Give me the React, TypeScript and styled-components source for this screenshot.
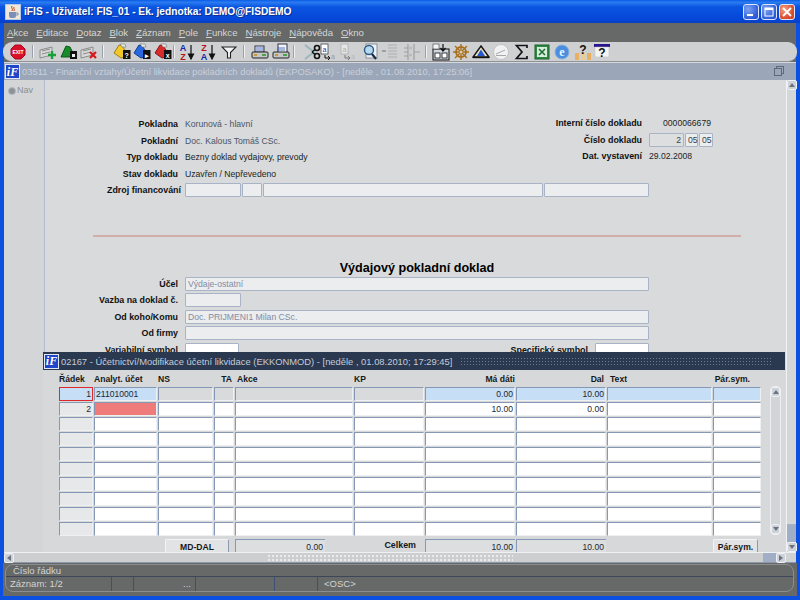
import React from 'react'
import styled, { createGlobalStyle } from 'styled-components'

const GlobalStyle = createGlobalStyle`
  html, body {
    margin: 0;
    padding: 0;
    background: #0a4fdc;
  }
  * {
    box-sizing: border-box;
  }
`

const Frame = styled.div`
  position: relative;
  width: 800px;
  height: 600px;
  overflow: hidden;
  display: flex;
  flex-direction: column;
  font-family: "Liberation Sans", Arial, sans-serif;
  background: #0b50e0;
`

const TitleBar = styled.div`
  height: 23px;
  flex: none;
  display: flex;
  align-items: center;
  padding: 0 5px 0 5px;
  background: linear-gradient(180deg, #0a5ce6 0%, #2b7cf2 10%, #0a55e0 30%, #0546d8 85%, #0a3fc0 100%);
  color: #fff;
  font-weight: 700;
  font-size: 10.2px;
`

const TitleText = styled.span`
  margin-left: 0;
  flex: 1;
  text-shadow: 1px 1px 0 #0a2f90;
  white-space: nowrap;
`

const WinButtons = styled.div`
  display: flex;
  gap: 2px;
`

const WinButton = styled.div<{ $close?: boolean }>`
  width: 16px;
  height: 16px;
  border: 1px solid #dfe8fb;
  border-radius: 3px;
  display: flex;
  align-items: center;
  justify-content: center;
  background: ${p => (p.$close ? 'radial-gradient(circle at 30% 30%, #f0a080, #d8482a 70%)' : 'radial-gradient(circle at 30% 30%, #7ea4f0, #2a58d8 75%)')};
`

const Body = styled.div`
  flex: 1;
  min-height: 0;
  margin: 0 4px 4px 4px;
  display: flex;
  flex-direction: column;
  background: #666a68;
`

const MenuBar = styled.div`
  height: 19px;
  flex: none;
  display: flex;
  align-items: center;
  gap: 8px;
  padding: 0 0 0 3px;
  background: #666968;
  color: #d4d6d6;
  font-size: 9.6px;
`

const MenuItem = styled.span`
  display: inline-block;

  &::first-letter {
    text-decoration: underline;
  }
`

const Toolbar = styled.div`
  height: 20px;
  flex: none;
  display: flex;
  align-items: center;
  margin: 0 -1px;
  background: #cfd0d1;
  border-radius: 9px;
  border-bottom: 1px solid #8f9296;
`

const Tool = styled.div<{ $ml: number; $faded?: boolean }>`
  width: 18px;
  height: 18px;
  margin-left: ${p => p.$ml}px;
  flex: none;
  display: flex;
  align-items: center;
  justify-content: center;
  opacity: ${p => (p.$faded ? 0.45 : 1)};

  svg {
    flex: none;
  }
`

const ToolSep = styled.div<{ $ml: number }>`
  width: 2px;
  height: 13px;
  margin-left: ${p => p.$ml}px;
  flex: none;
  background: linear-gradient(90deg, #9aa0a8 50%, #f0f0f0 50%);
`

const Desktop = styled.div`
  position: relative;
  flex: 1;
  min-height: 0;
  display: flex;
  flex-direction: column;
  background: #d6d8d9;
`

const MdiTitle = styled.div`
  height: 17px;
  flex: none;
  display: flex;
  align-items: center;
  padding: 0 2px 0 1px;
  margin-top: 1px;
  background: #9ba6b8;
  color: #c9d0da;
  font-size: 9.4px;
  white-space: nowrap;
`

const TitleCaption = styled.span`
  margin-left: 2px;
  flex: 1;
`

const Logo = styled.span`
  width: 15px;
  height: 15px;
  flex: none;
  display: inline-flex;
  align-items: center;
  justify-content: center;
  background: #1f45c8;
  border: 1px solid #dfe6f4;
  color: #fff;
  font-family: "Liberation Serif", serif;
  font-style: italic;
  font-weight: 700;
  font-size: 12px;
  line-height: 1;
`

const RestoreIcon = styled.div`
  width: 8px;
  height: 8px;
  margin-right: 12px;
  border: 1px solid #5f6a78;
  box-shadow: 2px -2px 0 -1px #9ba6b8, 2px -2px 0 0 #5f6a78;
`

const MdiBody = styled.div`
  flex: 1;
  min-height: 0;
  display: flex;
`

const NavColumn = styled.div`
  width: 41px;
  flex: none;
  padding: 5px 0 0 4px;
  background: #d3d5d6;
  border-right: 1px solid #b4bdd0;
  color: #8b9096;
  font-size: 9px;
  display: flex;
  align-items: flex-start;
  gap: 1px;
`

const NavDot = styled.span`
  width: 8px;
  height: 8px;
  margin-top: 2px;
  border-radius: 50%;
  background: #8d9298;
  border: 1px solid #b4b8bc;
`

const FormArea = styled.div`
  flex: 1;
  min-width: 0;
  padding-top: 36px;
  background: #d8dadb;
  color: #111;
  font-size: 9px;
`

const TopBlock = styled.div`
  display: flex;
`

const TopColumn = styled.div<{ $w?: number; $up?: number }>`
  width: ${p => (p.$w ? `${p.$w}px` : 'auto')};
  margin-top: ${p => (p.$up ? -p.$up : 0)}px;
`

const Row = styled.div<{ $gap?: number }>`
  height: 16.5px;
  display: flex;
  align-items: center;
  gap: ${p => p.$gap ?? 7}px;
`

const Label = styled.div<{ $w?: number }>`
  width: ${p => p.$w ?? 133}px;
  flex: none;
  text-align: right;
  font-weight: 700;
  font-size: 8.9px;
  white-space: nowrap;
`

const Value = styled.div<{ $muted?: boolean; $end?: number }>`
  color: ${p => (p.$muted ? '#4c5668' : '#1c1f24')};
  font-size: 8.65px;
  white-space: nowrap;
  text-align: ${p => (p.$end ? 'right' : 'left')};
  width: ${p => (p.$end ? `${p.$end}px` : 'auto')};
`

const Fields = styled.div`
  display: flex;
  gap: 1px;
`

const Field = styled.div<{ $w: number; $tone?: 'white' | 'gray' | 'pale'; $right?: boolean; $dark?: boolean }>`
  width: ${p => p.$w}px;
  height: 14px;
  flex: none;
  padding: 0 2px;
  display: flex;
  align-items: center;
  justify-content: ${p => (p.$right ? 'flex-end' : 'flex-start')};
  border: 1px solid #a8b4c6;
  border-radius: 1px;
  background-color: ${p => (p.$tone === 'white' ? '#fff' : p.$tone === 'gray' ? '#dcdedf' : '#ecedee')};
  color: ${p => (p.$dark ? '#3a3f48' : '#7f8ca6')};
  font-size: 8.65px;
  white-space: nowrap;
`

const Rule = styled.div`
  margin: 36px 0 0 48px;
  width: 648px;
  height: 2px;
  background: #d2aeaa;
`

const Heading = styled.div`
  margin: 23px 0 0 48px;
  width: 648px;
  height: 16px;
  line-height: 16px;
  text-align: center;
  color: #000;
  font-size: 12.6px;
  font-weight: 700;
`

const OuterScroll = styled.div`
  width: 10px;
  flex: none;
  display: flex;
  flex-direction: column;
  background: #d0d2d4;
  border-left: 1px solid #f0f2f4;
`

const ScrollArrow = styled.div<{ $dir: 'up' | 'down' | 'left' | 'right'; $box?: number }>`
  width: ${p => p.$box ?? 10}px;
  height: 10px;
  flex: none;
  display: flex;
  align-items: center;
  justify-content: center;
  background: #cdd2d8;
  border: 1px solid #eef0f4;
  border-radius: 2px;

  &::after {
    content: '';
    width: 0;
    height: 0;
    ${p => (p.$dir === 'up' || p.$dir === 'down'
      ? `border-left: 3px solid transparent; border-right: 3px solid transparent; border-${p.$dir === 'up' ? 'bottom' : 'top'}: 4px solid #6a7280;`
      : `border-top: 3px solid transparent; border-bottom: 3px solid transparent; border-${p.$dir === 'left' ? 'right' : 'left'}: 4px solid #6a7280;`)}
  }
`

const ScrollThumb = styled.div<{ $fill?: boolean; $blue?: boolean }>`
  flex: ${p => (p.$fill ? 1 : 'none')};
  height: ${p => (p.$fill ? 'auto' : '17px')};
  background: ${p => (p.$blue ? '#a0aec6' : '#d4d6d8')};
  border-bottom: ${p => (p.$blue ? 'none' : '1px solid #aab2c0')};
`

const HScroll = styled.div`
  height: 11px;
  flex: none;
  display: flex;
  background: #ccced0;
  border-top: 1px solid #eef0f2;
  border-bottom: 1px solid #8d98aa;
`

const HThumb = styled.div`
  flex: 1;
  background-color: #ccced0;
`

const HDots = styled.div`
  width: 246px;
  margin: 1px 250px 1px auto;
  background-image: radial-gradient(#eceef0 0.7px, transparent 0.8px);
  background-size: 4px 4px;
  height: 7px;
`

const HTrack = styled.div`
  width: 13px;
  background: #a0aec6;
`

const HCorner = styled.div`
  width: 10px;
  background: #d0d2d4;
`

/* child window lies over the form, as MDI windows do */
const ChildWindow = styled.div`
  position: absolute;
  left: 39px;
  top: 290px;
  width: 742px;
  height: 200px;
  display: flex;
  flex-direction: column;
  background: #d6d8d9;
  overflow: hidden;
`

const ChildTitle = styled.div`
  height: 18px;
  flex: none;
  display: flex;
  align-items: center;
  padding-left: 1px;
  background: #2a3850;
  color: #c4ccd8;
  font-size: 9.4px;
  white-space: nowrap;
`

const ChildCaption = styled.span`
  margin-left: 2px;
`

const TitleDots = styled.div`
  flex: 1;
  height: 8px;
  margin: 0 14px 0 8px;
  background-image: radial-gradient(#6a7a94 0.8px, transparent 0.9px);
  background-size: 3px 3px;
`

const ChildBody = styled.div`
  position: relative;
  flex: 1;
  min-height: 0;
  padding: 2px 0 0 16px;
`

const Table = styled.div`
  display: grid;
  grid-template-columns: 34px 63px 55px 20px 118px 70px 90px 90px 105px 48px;
  grid-auto-rows: 14px;
  gap: 1px;
`

const HeadCell = styled.div<{ $right?: boolean; $pad?: number }>`
  text-align: ${p => (p.$right ? 'right' : 'left')};
  ${p => (p.$right ? 'padding-right' : 'padding-left')}: ${p => p.$pad ?? 0}px;
  align-self: center;
  font-size: 8.6px;
  font-weight: 700;
  color: #15181c;
  white-space: nowrap;
`

type CellTone = 'white' | 'blue' | 'gray' | 'red' | 'num' | 'numCurrent'

const cellBackground: Record<CellTone, string> = {
  white: '#fff',
  blue: '#c6def6',
  gray: '#d8dadc',
  red: '#ef7b7b',
  num: '#e7e8e9',
  numCurrent: '#c6def6',
}

const Cell = styled.div<{ $tone: CellTone; $right?: boolean }>`
  display: flex;
  align-items: center;
  justify-content: ${p => (p.$right ? 'flex-end' : 'flex-start')};
  padding: 0 1px;
  background: ${p => cellBackground[p.$tone]};
  border: 1px solid ${p => (p.$tone === 'numCurrent' ? '#e0282c' : '#eef0f2')};
  border-top-color: ${p => (p.$tone === 'numCurrent' ? '#e0282c' : '#8798b4')};
  border-left-color: ${p => (p.$tone === 'numCurrent' ? '#e0282c' : '#8798b4')};
  color: #23272e;
  font-size: 8.6px;
  white-space: nowrap;
`

const TableScroll = styled.div`
  position: absolute;
  left: 727px;
  top: 16px;
  width: 11px;
  height: 149px;
  display: flex;
  flex-direction: column;
  justify-content: space-between;
  background: #d2d5d8;
  border: 1px solid #eceef2;
  border-radius: 4px;
`

const Footer = styled.div`
  display: flex;
  align-items: flex-start;
  margin-top: 3px;
  height: 14px;
`

const FootButton = styled.div<{ $w: number; $ml: number }>`
  width: ${p => p.$w}px;
  margin-left: ${p => p.$ml}px;
  height: 15px;
  flex: none;
  display: flex;
  align-items: center;
  justify-content: center;
  background: #e2e3e4;
  border: 1px solid #f2f3f4;
  border-right-color: #8b98ae;
  border-radius: 2px 2px 0 0;
  font-size: 8.6px;
  font-weight: 700;
  color: #15181c;
`

const FootField = styled.div<{ $ml?: number }>`
  width: 90px;
  margin-left: ${p => p.$ml ?? 0}px;
  height: 15px;
  flex: none;
  display: flex;
  align-items: center;
  justify-content: flex-end;
  padding-right: 2px;
  background: #dcdedf;
  border-top: 1px solid #8798b4;
  border-left: 1px solid #8798b4;
  font-size: 8.6px;
  color: #23272e;
`

const FootLabel = styled.div<{ $ml: number; $w: number }>`
  margin-left: ${p => p.$ml}px;
  width: ${p => p.$w}px;
  flex: none;
  line-height: 12px;
  text-align: right;
  font-size: 8.9px;
  font-weight: 700;
  color: #15181c;
`

const StatusBar = styled.div`
  height: 33px;
  flex: none;
  background: #666968;
  padding: 1px 3px 4px 2px;
  margin: 0 -1px;
`

const StatusInner = styled.div`
  height: 100%;
  display: flex;
  flex-direction: column;
  border: 1px solid #8a8e90;
  border-radius: 8px;
  color: #d2d4d4;
  font-size: 9.5px;
`

const StatusHint = styled.div`
  height: 12px;
  flex: none;
  padding-left: 7px;
  line-height: 12px;
  border-bottom: 1px solid #3c4658;
`

const StatusCells = styled.div`
  flex: 1;
  display: flex;
  align-items: center;
`

const StatusCell = styled.div<{ $w: number; $right?: boolean; $pl?: number }>`
  width: ${p => p.$w}px;
  height: 100%;
  flex: none;
  padding: 0 4px 0 ${p => p.$pl ?? 4}px;
  line-height: 14px;
  text-align: ${p => (p.$right ? 'right' : 'left')};
  border-right: 1px solid #3c4f74;
  white-space: nowrap;

  &:last-child {
    border-right: none;
  }
`

const Exit = () => (
  <svg width="16" height="16" viewBox="0 0 16 16">
    <path d="M5 1h6l4 4v6l-4 4H5l-4-4V5z" fill="#d8112a" stroke="#a80a1c" />
    <text x="8" y="10" textAnchor="middle" fontSize="5" fontWeight="700" fill="#fff" fontFamily="Liberation Sans">EXIT</text>
  </svg>
)

const RecordIcon = ({ mark }: { mark: 'add' | 'del' }) => (
  <svg width="18" height="16" viewBox="0 0 18 16">
    <path d="M1 6l12-3v8L1 14z" fill="#d8d8d8" stroke="#8c8c8c" />
    <path d="M3 7l8-2M3 10l8-2" stroke="#777" strokeWidth="0.8" />
    {mark === 'add'
      ? <path d="M13 7v8M9 11h8" stroke="#18a038" strokeWidth="2.4" />
      : <path d="M10 8l6 6M16 8l-6 6" stroke="#d81818" strokeWidth="2.2" />}
  </svg>
)

const GreenDoc = () => (
  <svg width="18" height="16" viewBox="0 0 18 16">
    <path d="M1 13l5-11 4 1 2 4v6z" fill="#178a2c" stroke="#0c5a1a" />
    <rect x="10" y="7" width="7" height="8" fill="#111" />
    <rect x="12" y="10" width="3" height="3" fill="#eee" />
  </svg>
)

const Folder = ({ color, edge, glyph }: { color: string; edge: string; glyph: string }) => (
  <svg width="18" height="17" viewBox="0 0 18 17">
    <path d="M1 10l5-8 3 1 3 4v7l-4 1z" fill={color} stroke={edge} />
    <path d="M7 1h5l1 3H9z" fill="#e8e8e8" stroke="#777" strokeWidth="0.6" />
    <rect x="10" y="7" width="7.5" height="9" fill="#111" />
    <text x="13.7" y="14.5" textAnchor="middle" fontSize="7" fontWeight="700" fill="#fff" fontFamily="Liberation Sans">{glyph}</text>
  </svg>
)

const Sort = ({ top, bottom }: { top: string; bottom: string }) => (
  <svg width="18" height="18" viewBox="0 0 18 18">
    <text x="5" y="8" textAnchor="middle" fontSize="9" fontWeight="700" fill={top === 'A' ? '#1428a8' : '#b01818'} fontFamily="Liberation Sans">{top}</text>
    <text x="5" y="17" textAnchor="middle" fontSize="9" fontWeight="700" fill={top === 'A' ? '#b01818' : '#1428a8'} fontFamily="Liberation Sans">{bottom}</text>
    <path d="M13 2v12M10.5 11l2.5 5 2.5-5z" stroke="#111" strokeWidth="1.2" fill="#111" />
  </svg>
)

const Filter = () => (
  <svg width="16" height="14" viewBox="0 0 16 14">
    <path d="M1 2h14l-5.5 5.5V13H6.500V7.500z" fill="#f4f4f4" stroke="#222" strokeWidth="1.1" />
  </svg>
)

const Printer = ({ tall }: { tall?: boolean }) => (
  <svg width="18" height="17" viewBox="0 0 18 17">
    <rect x={tall ? 6 : 4} y={tall ? 1 : 3} width="9" height={tall ? 9 : 6} fill="#f0f4fa" stroke="#334" />
    <path d="M5 5h8M5 7h8" stroke="#3858b8" strokeWidth="0.8" />
    <rect x="1" y="9" width="16" height="6" rx="1" fill="#c4c6c8" stroke="#222" />
    <path d="M11 12h4" stroke="#2c9a30" strokeWidth="1.6" />
    <path d="M3 12h3" stroke="#c89018" strokeWidth="1.6" />
  </svg>
)

const Scissors = () => (
  <svg width="20" height="18" viewBox="0 0 20 18">
    <path d="M2 2l9 7-9 7" fill="none" stroke="#9ab8bc" strokeWidth="2" />
    <circle cx="14" cy="5" r="2.500" fill="none" stroke="#111" strokeWidth="1.6" />
    <circle cx="14" cy="13" r="2.500" fill="none" stroke="#111" strokeWidth="1.6" />
    <path d="M9 9l3-2.500M9 9l3 2.500" stroke="#111" strokeWidth="1.4" />
  </svg>
)

const CopyIcon = ({ faded }: { faded?: boolean }) => (
  <svg width="18" height="18" viewBox="0 0 18 18">
    <rect x="2" y="1" width="7" height="10" fill="#fff" stroke={faded ? '#888' : '#444'} strokeWidth="0.8" />
    <text x="5.5" y="9" textAnchor="middle" fontSize="7" fill={faded ? '#888' : '#1838b8'} fontFamily="Liberation Sans">a</text>
    <path d="M6 12v3h5M9 13l2 2-2 2" fill="none" stroke="#111" strokeWidth="1" />
    <text x="14" y="16" textAnchor="middle" fontSize="7" fill="#999" fontFamily="Liberation Sans">a</text>
  </svg>
)

const Magnifier = () => (
  <svg width="18" height="18" viewBox="0 0 18 18">
    <rect x="5" y="1" width="11" height="14" fill="#eef2f6" stroke="#8a9098" />
    <circle cx="8" cy="7" r="4.500" fill="#b8d8ee" stroke="#2a5a88" strokeWidth="1.4" />
    <path d="M11 11l4 5" stroke="#1c2c44" strokeWidth="2.2" />
  </svg>
)

const ListIcon = () => (
  <svg width="18" height="17" viewBox="0 0 18 17">
    <path d="M7 2h9M7 5h9M7 8h9M7 11h9M7 14h9" stroke="#888" strokeWidth="1.2" />
    <path d="M1 8h4" stroke="#666" strokeWidth="2" />
  </svg>
)

const TreeIcon = () => (
  <svg width="18" height="18" viewBox="0 0 18 18">
    <path d="M5 1v16M11 1v16M1 5h4M1 9h4M1 13h4M11 9h6" stroke="#a0a0a0" strokeWidth="1.2" fill="none" />
    <path d="M5 5h4M5 12h4" stroke="#bbb" strokeWidth="2.600" />
  </svg>
)

const Board = () => (
  <svg width="18" height="18" viewBox="0 0 18 18">
    <rect x="1" y="6" width="16" height="11" fill="#cfd6e0" stroke="#111" />
    <rect x="3" y="10" width="5" height="5" fill="#fff" stroke="#111" strokeWidth="0.8" />
    <rect x="10" y="10" width="5" height="5" fill="#fff" stroke="#111" strokeWidth="0.8" />
    <rect x="1" y="1" width="6" height="5" fill="#f4f4f4" stroke="#555" strokeWidth="0.7" />
    <path d="M11 1v6M8.500 5l2.500 3 2.500-3" fill="none" stroke="#111" strokeWidth="1.200" />
  </svg>
)

const Wheel = () => (
  <svg width="18" height="16" viewBox="0 0 18 16">
    <circle cx="9" cy="8" r="5" fill="none" stroke="#a8701c" strokeWidth="1.800" />
    <path d="M9 0v16M1 8h16M3 2l12 12M15 2L3 14" stroke="#a8701c" strokeWidth="1.400" />
    <circle cx="9" cy="8" r="1.500" fill="#d8d0b0" />
  </svg>
)

const Roof = () => (
  <svg width="18" height="14" viewBox="0 0 18 14">
    <path d="M9 1l8 11H1z" fill="#e8e0c0" stroke="#111" strokeWidth="1.400" />
    <path d="M9 4.500l4 6.500H5z" fill="#2858d0" />
    <path d="M1 12.500h16" stroke="#111" strokeWidth="1.400" />
  </svg>
)

const Clock = () => (
  <svg width="18" height="18" viewBox="0 0 18 18">
    <circle cx="9" cy="9" r="7.500" fill="#f2f2f2" stroke="#c4c4c4" />
    <path d="M4 11l9-4M4 12.500h10" stroke="#a4a8ac" strokeWidth="1" />
  </svg>
)

const Sigma = () => (
  <svg width="16" height="16" viewBox="0 0 16 16">
    <path d="M13 4V1.500H2.500L8 8l-5.500 6.500H13V12" fill="none" stroke="#14141c" strokeWidth="1.700" />
  </svg>
)

const Excel = () => (
  <svg width="16" height="16" viewBox="0 0 16 16">
    <rect x="1" y="1" width="14" height="14" fill="#2e8a44" stroke="#1c5e2c" />
    <rect x="3" y="3" width="10" height="10" fill="#d8ecdc" />
    <path d="M5 5l6 6M11 5l-6 6" stroke="#1c6e34" strokeWidth="1.600" />
  </svg>
)

const Browser = () => (
  <svg width="18" height="17" viewBox="0 0 18 17">
    <circle cx="9" cy="9" r="7" fill="#4a8ee0" stroke="#8ab0d8" />
    <text x="9" y="13" textAnchor="middle" fontSize="12" fontWeight="700" fill="#eef6ff" fontFamily="Liberation Serif">e</text>
  </svg>
)

const HelpBooks = () => (
  <svg width="18" height="18" viewBox="0 0 18 18">
    <rect x="1" y="10" width="4" height="7" fill="#e8b060" />
    <rect x="7" y="10" width="4" height="7" fill="#e8d090" />
    <rect x="13" y="10" width="4" height="7" fill="#e8b060" />
    <text x="9" y="11" textAnchor="middle" fontSize="12" fontWeight="700" fill="#111" fontFamily="Liberation Sans">?</text>
  </svg>
)

const HelpWindow = () => (
  <svg width="18" height="17" viewBox="0 0 18 17">
    <rect x="1" y="1" width="16" height="3" fill="#28148c" />
    <rect x="2" y="4" width="14" height="10" fill="#f4f4f4" stroke="#bbb" strokeWidth="0.5" />
    <text x="9" y="14" textAnchor="middle" fontSize="12" fontWeight="700" fill="#111" fontFamily="Liberation Sans">?</text>
  </svg>
)

const CupIcon = () => (
  <svg width="16" height="16" viewBox="0 0 16 16" style={{ flex: 'none', marginRight: 3 }}>
    <rect x="0.500" y="0.500" width="15" height="15" fill="#f0e8d8" stroke="#b8c8e8" />
    <path d="M4 8h7v4a2 2 0 0 1-2 2H6a2 2 0 0 1-2-2z" fill="#7a90b8" />
    <path d="M7 2c-1.500 2 1.500 2.500 0 5M9 3c-1 1.500 1 2 0 4" fill="none" stroke="#c83818" />
    <path d="M11 9h2v2h-2" fill="none" stroke="#7a90b8" />
  </svg>
)

const TopLeftRows = [
  { label: 'Pokladna', value: 'Korunová - hlavní', muted: true },
  { label: 'Pokladní', value: 'Doc. Kalous Tomáš CSc.', muted: true },
  { label: 'Typ dokladu', value: 'Bezny doklad vydajovy, prevody' },
  { label: 'Stav dokladu', value: 'Uzavřen / Nepřevedeno' },
]

const menu = ['Akce', 'Editace', 'Dotaz', 'Blok', 'Záznam', 'Pole', 'Funkce', 'Nástroje', 'Nápověda', 'Okno']

const columns: { name: string; right?: boolean; pad?: number }[] = [
  { name: 'Řádek' },
  { name: 'Analyt. účet' },
  { name: 'NS' },
  { name: 'TA', right: true, pad: 2 },
  { name: 'Akce', pad: 2 },
  { name: 'KP' },
  { name: 'Má dáti', right: true },
  { name: 'Dal', right: true, pad: 2 },
  { name: 'Text', pad: 3 },
  { name: 'Pár.sym.', right: true, pad: 11 },
]

const rowCount = 10

const cellFor = (row: number, col: number): { tone: CellTone; text?: string; right?: boolean } => {
  if (col === 0) {
    if (row === 0) return { tone: 'numCurrent', text: '1', right: true }
    if (row === 1) return { tone: 'num', text: '2', right: true }
    return { tone: 'num' }
  }
  if (row === 0) {
    if (col === 1) return { tone: 'blue', text: '211010001' }
    if (col === 6) return { tone: 'blue', text: '0.00', right: true }
    if (col === 7) return { tone: 'blue', text: '10.00', right: true }
    if (col >= 8) return { tone: 'blue' }
    return { tone: 'gray' }
  }
  if (row === 1) {
    if (col === 1) return { tone: 'red' }
    if (col === 6) return { tone: 'white', text: '10.00', right: true }
    if (col === 7) return { tone: 'white', text: '0.00', right: true }
  }
  return { tone: 'white' }
}

const App: React.FC = () => {
  return (
    <Frame>
      <GlobalStyle />
      <TitleBar>
        <CupIcon />
        <TitleText>iFIS - Uživatel: FIS_01 - Ek. jednotka: DEMO@FISDEMO</TitleText>
        <WinButtons>
          <WinButton>
            <svg width="10" height="10" viewBox="0 0 10 10"><rect x="1" y="7" width="6" height="2" fill="#fff" /></svg>
          </WinButton>
          <WinButton>
            <svg width="10" height="10" viewBox="0 0 10 10"><rect x="1" y="1" width="8" height="8" fill="none" stroke="#fff" /><rect x="1" y="1" width="8" height="2" fill="#fff" /></svg>
          </WinButton>
          <WinButton $close>
            <svg width="10" height="10" viewBox="0 0 10 10"><path d="M1 1l8 8M9 1l-8 8" stroke="#fff" strokeWidth="1.800" /></svg>
          </WinButton>
        </WinButtons>
      </TitleBar>
      <Body>
        <MenuBar>
          {menu.map(item => <MenuItem key={item}>{item}</MenuItem>)}
        </MenuBar>
        <Toolbar>
          <Tool $ml={6}><Exit /></Tool>
          <ToolSep $ml={5} />
          <Tool $ml={5}><RecordIcon mark="add" /></Tool>
          <Tool $ml={3}><GreenDoc /></Tool>
          <Tool $ml={2}><RecordIcon mark="del" /></Tool>
          <ToolSep $ml={4} />
          <Tool $ml={9}><Folder color="#f0c828" edge="#a08010" glyph="?" /></Tool>
          <Tool $ml={2}><Folder color="#2868e0" edge="#103c90" glyph="▸" /></Tool>
          <Tool $ml={3}><Folder color="#d82c2c" edge="#901414" glyph="x" /></Tool>
          <ToolSep $ml={1} />
          <Tool $ml={3}><Sort top="A" bottom="Z" /></Tool>
          <Tool $ml={3}><Sort top="Z" bottom="A" /></Tool>
          <Tool $ml={3}><Filter /></Tool>
          <ToolSep $ml={5} />
          <Tool $ml={6}><Printer /></Tool>
          <Tool $ml={3}><Printer tall /></Tool>
          <ToolSep $ml={3} />
          <Tool $ml={9}><Scissors /></Tool>
          <Tool $ml={-3}><CopyIcon /></Tool>
          <Tool $ml={2} $faded><CopyIcon faded /></Tool>
          <Tool $ml={4}><Magnifier /></Tool>
          <Tool $ml={2} $faded><ListIcon /></Tool>
          <Tool $ml={4}><TreeIcon /></Tool>
          <ToolSep $ml={4} />
          <Tool $ml={5}><Board /></Tool>
          <Tool $ml={2}><Wheel /></Tool>
          <Tool $ml={2}><Roof /></Tool>
          <Tool $ml={2}><Clock /></Tool>
          <Tool $ml={3}><Sigma /></Tool>
          <Tool $ml={2}><Excel /></Tool>
          <Tool $ml={2}><Browser /></Tool>
          <Tool $ml={3}><HelpBooks /></Tool>
          <Tool $ml={1}><HelpWindow /></Tool>
        </Toolbar>
        <Desktop>
          <MdiTitle>
            <Logo>iF</Logo>
            <TitleCaption>03511 - Finanční vztahy/Účetní likvidace pokladních dokladů (EKPOSAKO) - [neděle , 01.08.2010, 17:25:06]</TitleCaption>
            <RestoreIcon />
          </MdiTitle>
          <MdiBody>
            <NavColumn>
              <NavDot />
              Nav
            </NavColumn>
            <FormArea>
              <TopBlock>
                <TopColumn $w={497}>
                  {TopLeftRows.map(row => (
                    <Row key={row.label}>
                      <Label>{row.label}</Label>
                      <Value $muted={row.muted}>{row.value}</Value>
                    </Row>
                  ))}
                </TopColumn>
                <TopColumn $up={1}>
                  <Row>
                    <Label $w={100}>Interní číslo dokladu</Label>
                    <Value $end={62}>0000066679</Value>
                  </Row>
                  <Row>
                    <Label $w={100}>Číslo dokladu</Label>
                    <Fields>
                      <Field $w={35} $tone="gray" $right $dark>2</Field>
                      <Field $w={13} $tone="pale" $dark>05</Field>
                      <Field $w={14} $tone="pale" $dark>05</Field>
                    </Fields>
                  </Row>
                  <Row>
                    <Label $w={100}>Dat. vystavení</Label>
                    <Value>29.02.2008</Value>
                  </Row>
                </TopColumn>
              </TopBlock>
              <Row $gap={4}>
                <Label $w={136}>Zdroj financování</Label>
                <Fields>
                  <Field $w={56} />
                  <Field $w={20} />
                  <Field $w={280} />
                  <Field $w={105} />
                </Fields>
              </Row>
              <Rule />
              <Heading>Výdajový pokladní doklad</Heading>
              <Row>
                <Label>Účel</Label>
                <Field $w={464}>Výdaje-ostatní</Field>
              </Row>
              <Row>
                <Label>Vazba na doklad č.</Label>
                <Field $w={56} />
              </Row>
              <Row>
                <Label>Od koho/Komu</Label>
                <Field $w={464}>Doc. PRIJMENI1 Milan CSc.</Field>
              </Row>
              <Row>
                <Label>Od firmy</Label>
                <Field $w={464} />
              </Row>
              <Row>
                <Label>Variabilní symbol</Label>
                <Field $w={54} $tone="white" />
                <Label $w={342}>Specifický symbol</Label>
                <Field $w={54} $tone="white" />
              </Row>
            </FormArea>
            <OuterScroll>
              <ScrollArrow $dir="up" />
              <ScrollThumb $fill />
              <ScrollThumb $blue />
              <ScrollArrow $dir="down" />
            </OuterScroll>
          </MdiBody>
          <HScroll>
            <ScrollArrow $dir="left" />
            <HThumb><HDots /></HThumb>
            <HTrack />
            <ScrollArrow $dir="right" />
            <HCorner />
          </HScroll>
          <ChildWindow>
            <ChildTitle>
              <Logo>iF</Logo>
              <ChildCaption>02167 - Účetnictví/Modifikace účetní likvidace (EKKONMOD) - [neděle , 01.08.2010; 17:29:45]</ChildCaption>
              <TitleDots />
            </ChildTitle>
            <ChildBody>
              <Table>
                {columns.map(col => (
                  <HeadCell key={col.name} $right={col.right} $pad={col.pad}>{col.name}</HeadCell>
                ))}
                {Array.from({ length: rowCount }).map((_, row) =>
                  columns.map((col, index) => {
                    const cell = cellFor(row, index)
                    return (
                      <Cell key={`${row}-${col.name}`} $tone={cell.tone} $right={cell.right}>
                        {cell.text}
                      </Cell>
                    )
                  })
                )}
              </Table>
              <TableScroll>
                <ScrollArrow $dir="up" $box={9} />
                <ScrollArrow $dir="down" $box={9} />
              </TableScroll>
              <Footer>
                <FootButton $w={64} $ml={106}>MD-DAL</FootButton>
                <FootField $ml={6}>0.00</FootField>
                <FootLabel $ml={58} $w={33}>Celkem</FootLabel>
                <FootField $ml={9}>10.00</FootField>
                <FootField $ml={1}>10.00</FootField>
                <FootButton $w={45} $ml={107}>Pár.sym.</FootButton>
              </Footer>
            </ChildBody>
          </ChildWindow>
        </Desktop>
        <StatusBar>
          <StatusInner>
            <StatusHint>Číslo řádku</StatusHint>
            <StatusCells>
              <StatusCell $w={106}>Záznam: 1/2</StatusCell>
              <StatusCell $w={22} />
              <StatusCell $w={62} $right>...</StatusCell>
              <StatusCell $w={79} />
              <StatusCell $w={43} />
              <StatusCell $w={120} $pl={6}>&lt;OSC&gt;</StatusCell>
            </StatusCells>
          </StatusInner>
        </StatusBar>
      </Body>
    </Frame>
  )
}

export default App
